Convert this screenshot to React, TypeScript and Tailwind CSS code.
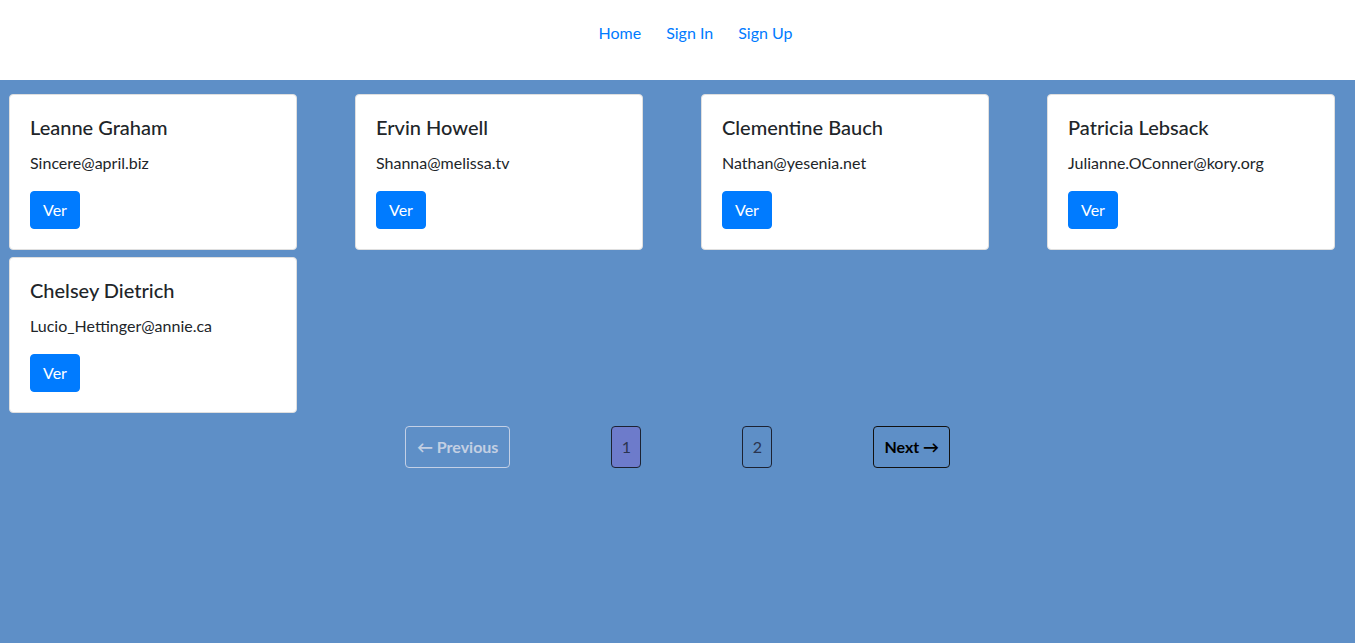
import React, { useState } from 'react';

interface User {
  id: number;
  name: string;
  email: string;
}

const users: User[] = [
  { id: 1, name: 'Leanne Graham', email: 'Sincere@april.biz' },
  { id: 2, name: 'Ervin Howell', email: 'Shanna@melissa.tv' },
  { id: 3, name: 'Clementine Bauch', email: 'Nathan@yesenia.net' },
  { id: 4, name: 'Patricia Lebsack', email: 'Julianne.OConner@kory.org' },
  { id: 5, name: 'Chelsey Dietrich', email: 'Lucio_Hettinger@annie.ca' },
];

const UserCard: React.FC<{ user: User }> = ({ user }) => (
  <div className="bg-white border border-[#dfdfdf] rounded-[4px] p-5 text-[#212529]">
    <h5 className="text-[20px] leading-6 font-medium mb-3">{user.name}</h5>
    <p className="text-base leading-6 mb-4">{user.email}</p>
    <button className="bg-[#007bff] border border-[#007bff] text-white text-base leading-6 px-3 py-[6px] rounded-[4px]">
      Ver
    </button>
  </div>
);

export default function App() {
  const [page, setPage] = useState(1);

  return (
    <div className="min-h-[643px] bg-[#5e8fc7] font-['Lato','Noto_Sans',sans-serif]">
      {/* Navbar */}
      <nav className="h-20 bg-white flex justify-center pt-[13px]">
        <ul className="flex gap-[25px] h-10 pl-[36px]">
          {['Home', 'Sign In', 'Sign Up'].map((item) => (
            <li key={item}>
              <a href="#" className="text-[#007bff] text-base leading-6 py-2 block">
                {item}
              </a>
            </li>
          ))}
        </ul>
      </nav>

      {/* Users */}
      <div className="grid grid-cols-[repeat(4,288px)] justify-between gap-y-[7px] pl-[9px] pr-[20px] pt-[14px]">
        {users.map((u) => (
          <UserCard key={u.id} user={u} />
        ))}
      </div>

      {/* Pagination */}
      <ul className="flex justify-center items-center gap-[101px] mt-[13px] text-base">
        <li>
          <button
            disabled
            className="h-[42px] px-[11px] border border-[#c3d0e6] rounded-[4px] font-bold text-[#c3cfe3]"
          >
            ← Previous
          </button>
        </li>
        {[1, 2].map((n) => (
          <li key={n}>
            <button
              onClick={() => setPage(n)}
              className={`h-[42px] w-[30px] border border-[#1c2233] rounded-[4px] text-[#2a3450] ${
                page === n ? 'bg-[#6d7bcb]' : ''
              }`}
            >
              {n}
            </button>
          </li>
        ))}
        <li>
          <button className="h-[42px] px-[10px] border border-[#111] rounded-[4px] font-bold text-black">
            Next →
          </button>
        </li>
      </ul>
    </div>
  );
}
